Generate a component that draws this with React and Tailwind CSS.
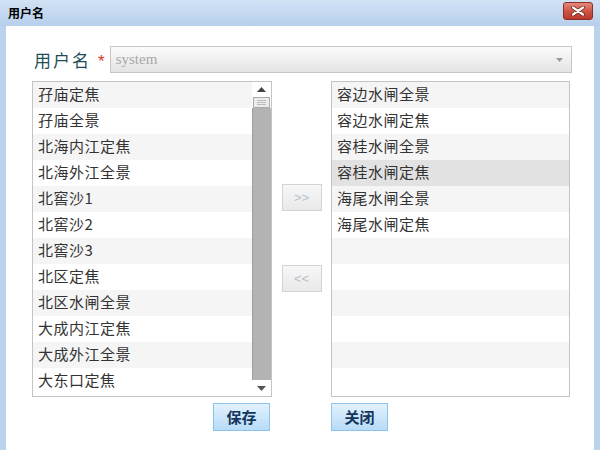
import React from "react";

const leftItems = [
  "孖庙定焦",
  "孖庙全景",
  "北海内江定焦",
  "北海外江全景",
  "北窖沙1",
  "北窖沙2",
  "北窖沙3",
  "北区定焦",
  "北区水闸全景",
  "大成内江定焦",
  "大成外江全景",
  "大东口定焦",
];

const rightItems = [
  "容边水闸全景",
  "容边水闸定焦",
  "容桂水闸全景",
  "容桂水闸定焦",
  "海尾水闸全景",
  "海尾水闸定焦",
];

const cjk = "font-['Noto_Sans_CJK_SC','Microsoft_YaHei',sans-serif]";

const Row = ({ text, index, selected }) => (
  <div
    className={`h-[26px] shrink-0 flex items-center pl-[5px] pb-[2px] text-[15px] tracking-[0.5px] text-[#333] ${
      selected ? "bg-[#e2e2e2]" : index % 2 === 0 ? "bg-[#f5f5f5]" : "bg-white"
    }`}
  >
    {text}
  </div>
);

const MoveButton = ({ label }) => (
  <button className="w-[40px] h-[27px] border border-[#d4d4d4] bg-gradient-to-b from-[#f7f7f7] to-[#e9e9e9] text-[13px] text-[#b3c0cc] font-['Liberation_Sans',sans-serif] flex items-center justify-center">
    {label}
  </button>
);

const BlueButton = ({ label }) => (
  <button className="w-[57px] h-[28px] border border-[#8cc3ea] bg-gradient-to-b from-[#e3f2ff] to-[#b7dbf7] text-[15px] font-bold text-[#15355a] flex items-center justify-center">
    {label}
  </button>
);

export default function App() {
  return (
    <div className={`w-[600px] h-[450px] flex flex-col bg-[#bcd3ee] ${cjk}`}>
      {/* title bar */}
      <div className="h-[26px] shrink-0 flex items-center justify-between pl-[8px] pr-[7px] bg-gradient-to-b from-[#d2e2f5] to-[#b7cfeb]">
        <span className="text-[12px] font-bold text-black leading-none">用户名</span>
        <button className="w-[30px] h-[18px] -mt-[4px] rounded-[3px] border border-[#8b2f25] bg-gradient-to-b from-[#e48a7c] via-[#cf5445] to-[#b9392b] flex items-center justify-center">
          <svg width="14" height="10" viewBox="0 0 14 10">
            <path d="M2 1.5 L12 8.5 M12 1.5 L2 8.5" stroke="#5a1a12" strokeWidth="3.6" strokeLinecap="round" />
            <path d="M2 1.5 L12 8.5 M12 1.5 L2 8.5" stroke="#fff" strokeWidth="2.2" strokeLinecap="round" />
          </svg>
        </button>
      </div>

      {/* body */}
      <div className="flex-1 mx-[6px] bg-white flex flex-col pt-[20px] pl-[26px]">
        <div className="h-[27px] flex items-center">
          <span className="ml-[2px] text-[17px] text-[#1e4d58] tracking-[2px]">用户名</span>
          <span className="ml-[7px] mt-[4px] text-[17px] text-[#e0352b] font-['Liberation_Sans',sans-serif]">*</span>
          <div className="ml-[5px] w-[462px] h-[27px] border border-[#c6c6c6] bg-gradient-to-b from-[#fbfbfb] to-[#e4e4e4] flex items-center justify-between pl-[5px] pr-[8px]">
            <span className="text-[15px] text-[#a8a8a8] font-['Liberation_Serif',serif]">system</span>
            <svg width="7" height="4" viewBox="0 0 7 4">
              <path d="M0 0 H7 L3.5 4 Z" fill="#9a9a9a" />
            </svg>
          </div>
        </div>

        <div className="mt-[8px] flex">
          {/* left list */}
          <div className="w-[240px] h-[316px] border border-[#c4c4c4] flex overflow-hidden">
            <div className="flex-1 flex flex-col overflow-hidden">
              {leftItems.map((t, i) => (
                <Row key={t} text={t} index={i} />
              ))}
            </div>
            <div className="w-[19px] flex flex-col bg-white">
              <div className="h-[15px] flex items-center justify-center">
                <svg width="9" height="5" viewBox="0 0 9 5">
                  <path d="M0 5 L4.5 0 L9 5 Z" fill="#444" />
                </svg>
              </div>
              <div className="h-[11px] mx-[1px] border border-[#a9a9a9] bg-[#ececec] flex flex-col items-center justify-center gap-[1px]">
                <div className="w-[9px] h-px bg-[#bdbdbd]" />
                <div className="w-[9px] h-px bg-[#bdbdbd]" />
                <div className="w-[9px] h-px bg-[#bdbdbd]" />
              </div>
              <div className="flex-1 bg-[#b3b3b3] border-l border-[#9e9e9e]" />
              <div className="h-[16px] flex items-center justify-center">
                <svg width="9" height="5" viewBox="0 0 9 5">
                  <path d="M0 0 H9 L4.5 5 Z" fill="#555" />
                </svg>
              </div>
            </div>
          </div>

          {/* move buttons */}
          <div className="w-[59px] flex flex-col items-center pt-[103px] gap-[54px]">
            <MoveButton label=">>" />
            <MoveButton label="<<" />
          </div>

          {/* right list */}
          <div className="w-[239px] h-[316px] border border-[#c4c4c4] flex flex-col overflow-hidden">
            {Array.from({ length: 12 }).map((_, i) => (
              <Row key={i} text={rightItems[i] || ""} index={i} selected={i === 3} />
            ))}
          </div>
        </div>

        <div className="mt-[6px] flex">
          <div className="ml-[181px]">
            <BlueButton label="保存" />
          </div>
          <div className="ml-[61px]">
            <BlueButton label="关闭" />
          </div>
        </div>
      </div>
    </div>
  );
}
